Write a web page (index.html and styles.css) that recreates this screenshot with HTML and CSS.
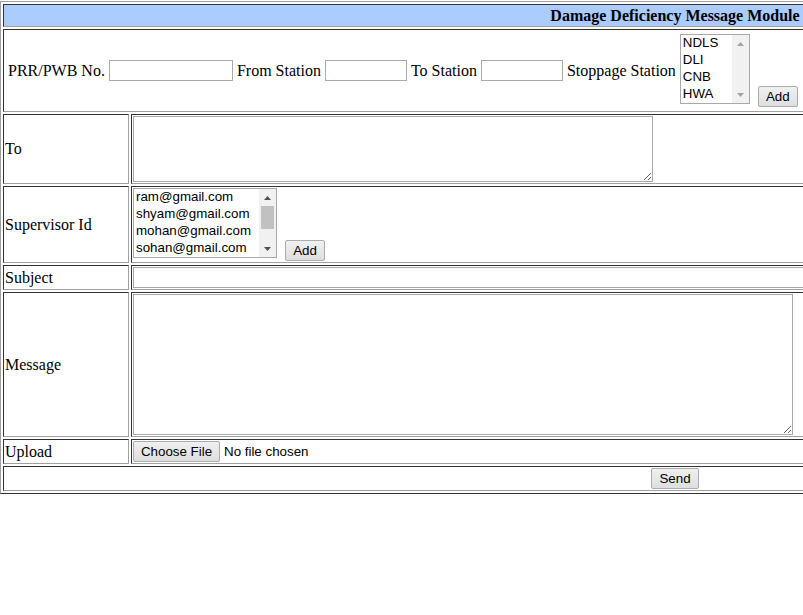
FILE: index.html
```html
<!DOCTYPE html>
<html lang="en">
<head>
<meta charset="utf-8">
<title>Damage Deficiency Message Module</title>
<link rel="stylesheet" href="styles.css">
</head>
<body>
<table class="form-table">
  <tr>
    <th colspan="2" class="title">Damage Deficiency Message Module</th>
  </tr>
  <tr>
    <td colspan="2" class="cell">
      <div class="route">
        <div class="fields">
          <label for="prr">PRR/PWB No.</label>
          <input id="prr" class="txt w-prr" type="text">
          <label for="from">From Station</label>
          <input id="from" class="txt w-stn from-input" type="text">
          <label for="to">To Station</label>
          <input id="to" class="txt w-stn" type="text">
          <span>Stoppage Station</span>
        </div>
        <div class="pick">
          <div class="listbox stations">
            <ul class="items">
              <li>NDLS</li>
              <li>DLI</li>
              <li>CNB</li>
              <li>HWA</li>
            </ul>
            <div class="sbar disabled">
              <span class="arrow"><svg width="7" height="4" viewBox="0 0 7 4"><path d="M0 4L3.5 0L7 4Z"/></svg></span>
              <span class="track"></span>
              <span class="arrow"><svg width="7" height="4" viewBox="0 0 7 4"><path d="M0 0L3.5 4L7 0Z"/></svg></span>
            </div>
          </div>
          <button class="btn add" type="button">Add</button>
        </div>
      </div>
    </td>
  </tr>
  <tr>
    <td class="label">To</td>
    <td class="cell"><textarea class="area to-area"></textarea></td>
  </tr>
  <tr>
    <td class="label">Supervisor Id</td>
    <td class="cell">
      <div class="pick">
        <div class="listbox emails">
          <ul class="items">
            <li>ram@gmail.com</li>
            <li>shyam@gmail.com</li>
            <li>mohan@gmail.com</li>
            <li>sohan@gmail.com</li>
          </ul>
          <div class="sbar">
            <span class="arrow"><svg width="7" height="4" viewBox="0 0 7 4"><path d="M0 4L3.5 0L7 4Z"/></svg></span>
            <span class="track"><span class="thumb"></span></span>
            <span class="arrow"><svg width="7" height="4" viewBox="0 0 7 4"><path d="M0 0L3.5 4L7 0Z"/></svg></span>
          </div>
        </div>
        <button class="btn add" type="button">Add</button>
      </div>
    </td>
  </tr>
  <tr>
    <td class="label">Subject</td>
    <td class="cell"><input class="txt subject" type="text"></td>
  </tr>
  <tr>
    <td class="label">Message</td>
    <td class="cell"><textarea class="area msg-area"></textarea></td>
  </tr>
  <tr>
    <td class="label">Upload</td>
    <td class="cell"><input class="file" type="file"></td>
  </tr>
  <tr>
    <td colspan="2" class="cell center"><button class="btn send" type="button">Send</button></td>
  </tr>
</table>
</body>
</html>
```

FILE: styles.css
```css
html, body {
  margin: 0;
  padding: 0;
  overflow: hidden;
  background: #fff;
}

body {
  font-family: "Liberation Serif", "Times New Roman", serif;
  font-size: 16px;
  color: #000;
}

.form-table {
  width: 1350px;
  margin-top: 1px;
  border-collapse: separate;
  border-spacing: 2px;
  border: 1px solid;
  border-color: #a0a0a0 #333 #333 #a0a0a0;
}

.form-table th,
.form-table td {
  border: 1px solid;
  border-color: #333 #a0a0a0 #a0a0a0 #333;
  padding: 1px;
  vertical-align: middle;
}

.title {
  background: #aaccff;
  font-weight: bold;
  text-align: center;
  line-height: 19px;
}

.label {
  width: 122px;
  text-align: left;
}

.center {
  text-align: center;
}

.route {
  display: flex;
  align-items: center;
  gap: 4px;
  padding: 3px 0 3px 3px;
}

.fields {
  display: flex;
  align-items: center;
  gap: 4px;
  white-space: nowrap;
}

.from-input {
  margin-left: 1px;
}

.txt {
  box-sizing: border-box;
  height: 21px;
  margin: 0;
  padding: 1px 2px;
  border: 1px solid #a9a9a9;
  background: #fff;
  font: 13.333px "Liberation Sans", Arial, sans-serif;
}

.w-prr { width: 124px; }
.w-stn { width: 82px; }

.subject {
  display: block;
  width: 100%;
}

.pick {
  display: flex;
  align-items: flex-end;
  gap: 8px;
}

.listbox {
  display: flex;
  box-sizing: border-box;
  height: 70px;
  margin-bottom: 3px;
  border: 1px solid #a9a9a9;
  background: #fff;
  overflow: hidden;
}

.stations { width: 70px; }
.emails { width: 144px; }

.items {
  flex: 1;
  margin: -1px 0 0;
  padding: 0;
  list-style: none;
  overflow: hidden;
  font: 13.333px/17px "Liberation Sans", Arial, sans-serif;
  white-space: nowrap;
}

.items li {
  padding: 0 2px;
}

.sbar {
  display: flex;
  flex-direction: column;
  width: 17px;
  background: #f1f1f1;
  fill: #505050;
}

.sbar.disabled {
  fill: #a3a3a3;
}

.arrow {
  display: flex;
  align-items: center;
  justify-content: center;
  height: 17px;
}

.track {
  flex: 1;
  display: flex;
  flex-direction: column;
}

.thumb {
  height: 23px;
  margin: 0 2px;
  background: #c1c1c1;
}

.btn,
.file::file-selector-button {
  box-sizing: border-box;
  height: 21px;
  padding: 0 6px;
  border: 1px solid #acacac;
  border-radius: 2px;
  background: linear-gradient(#f0f0f0, #e9e9e9 40%, #dedede);
  color: #000;
  font: 13.333px "Liberation Sans", Arial, sans-serif;
}

.btn { margin: 0; }
.add { width: 40px; }
.send { width: 48px; }

.area {
  display: block;
  box-sizing: border-box;
  margin: 0;
  padding: 2px;
  border: 1px solid #a9a9a9;
  font: 13.333px "Liberation Mono", monospace;
}

.to-area { width: 520px; height: 66px; }
.msg-area { width: 660px; height: 141px; }

.file {
  display: block;
  width: 300px;
  height: 21px;
  margin: 0;
  padding: 0;
  color: #000;
  font: 13.333px "Liberation Sans", Arial, sans-serif;
}

.file::file-selector-button {
  width: 87px;
  margin: 0 4px 0 0;
}
```
